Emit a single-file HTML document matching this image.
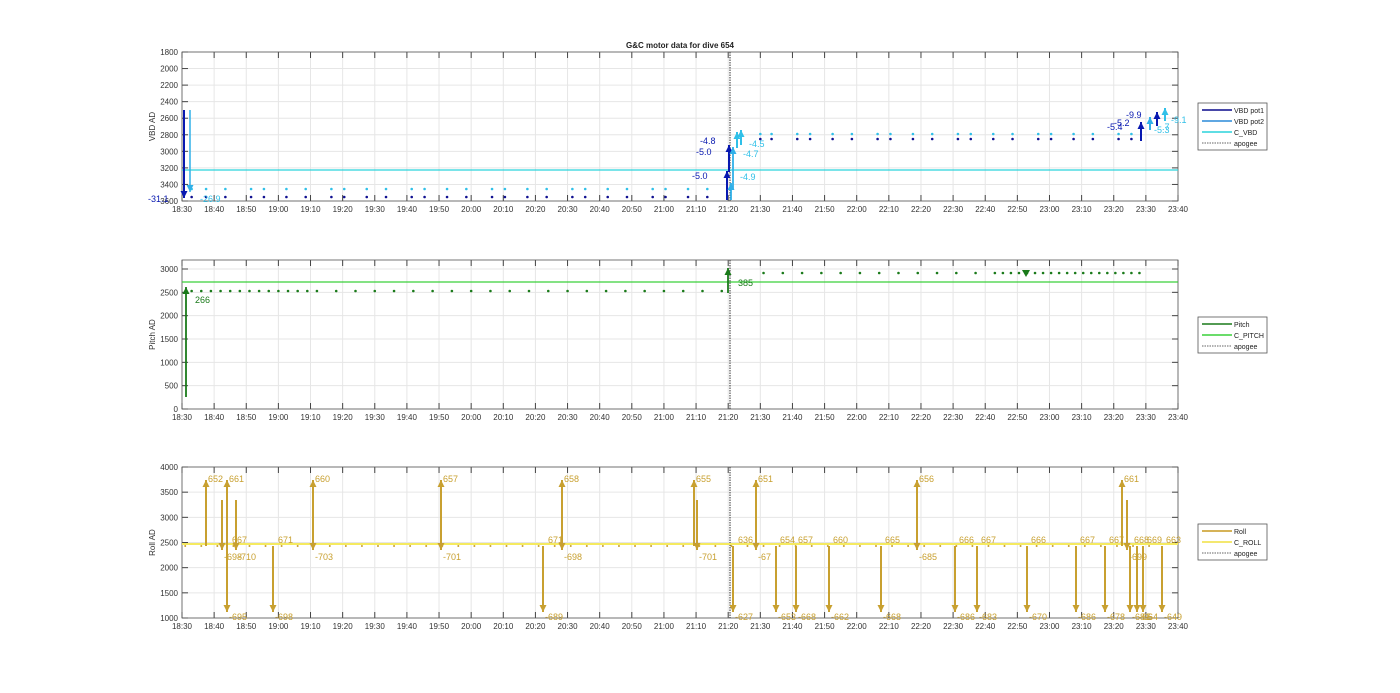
<!DOCTYPE html>
<html><head><meta charset="utf-8">
<style>
html,body{margin:0;padding:0;background:#fff;width:1400px;height:693px;overflow:hidden}
svg{display:block;font-family:"Liberation Sans",sans-serif}
</style></head>
<body>
<svg id="s" width="1400" height="693" viewBox="0 0 1400 693" xmlns="http://www.w3.org/2000/svg">
<text x="680" y="48" font-size="8" font-weight="bold" text-anchor="middle" fill="#222">G&amp;C motor data for dive 654</text>
</svg>
<script>
var S=document.getElementById('s'),NS='http://www.w3.org/2000/svg';
function el(n,a,t){var e=document.createElementNS(NS,n);for(var k in a)e.setAttribute(k,a[k]);if(t!==undefined)e.textContent=t;S.appendChild(e);return e;}
var X0=182,X1=1178;function X(t){return X0+t*(X1-X0)/310;}
var labels=[];for(var i=0;i<=31;i++){var m=18*60+30+i*10;var h=Math.floor(m/60),mm=m%60;labels.push(h+':'+(mm<10?'0':'')+mm);}
function panel(top,bot,yticks,Y,ylabel,leg){
 for(var i=0;i<=31;i++){var x=X(i*10);el('line',{x1:x,y1:top,x2:x,y2:bot,stroke:'#e6e6e6','stroke-width':1});}
 yticks.forEach(function(v){var y=Y(v);el('line',{x1:X0,y1:y,x2:X1,y2:y,stroke:'#e6e6e6'});el('text',{x:X0-4,y:y+3,'font-size':8,'text-anchor':'end',fill:'#333'},v);
  el('line',{x1:X0,y1:y,x2:X0+6,y2:y,stroke:'#444'});el('line',{x1:X1,y1:y,x2:X1-6,y2:y,stroke:'#444'});});
 for(var i=0;i<=31;i++){var x=X(i*10);el('line',{x1:x,y1:bot,x2:x,y2:bot-6,stroke:'#444'});el('line',{x1:x,y1:top,x2:x,y2:top+6,stroke:'#444'});
  el('text',{x:x,y:bot+11,'font-size':8,'text-anchor':'middle',fill:'#333'},labels[i]);}
 el('rect',{x:X0,y:top,width:X1-X0,height:bot-top,fill:'none',stroke:'#555','stroke-width':0.8});
 var cy=(top+bot)/2;var t=el('text',{x:0,y:0,'font-size':8,'text-anchor':'middle',fill:'#333',transform:'translate('+(155)+','+cy+') rotate(-90)'},ylabel);
 el('line',{x1:730,y1:top,x2:730,y2:bot,stroke:'#333','stroke-dasharray':'1.5,1'});
 var ly=leg.y;el('rect',{x:1198,y:ly,width:69,height:leg.items.length*11+3,fill:'#fff',stroke:'#555','stroke-width':0.8});
 leg.items.forEach(function(it,k){var yy=ly+7+k*11;el('line',{x1:1202,y1:yy,x2:1232,y2:yy,stroke:it[1],'stroke-width':it[2]?0.8:1.5,'stroke-dasharray':it[2]?'1.5,1':''});
  el('text',{x:1234,y:yy+3,'font-size':7,fill:'#222'},it[0]);});
}
function dot(x,y,c,r){el('circle',{cx:x,cy:y,r:r||1.3,fill:c});}
function arrow(x,y1,y2,c,w){el('line',{x1:x,y1:y1,x2:x,y2:y2,stroke:c,'stroke-width':w||1.8});var d=y2<y1?-1:1;
 el('path',{d:'M'+(x-3.5)+','+(y2-d*7)+' L'+(x+3.5)+','+(y2-d*7)+' L'+x+','+y2+'Z',fill:c});}
function txt(x,y,s,c,fs){el('text',{x:x,y:y,'font-size':fs||9,fill:c},s);}
// TOP
var YT=function(v){return 52+(v-1800)*149/1800;};
panel(52,201,[1800,2000,2200,2400,2600,2800,3000,3200,3400,3600],YT,'VBD AD',{y:103,items:[['VBD pot1','#0a0a8c'],['VBD pot2','#2a8ad8'],['C_VBD','#2ad4dc'],['apogee','#333',1]]});
el('line',{x1:X0,y1:170,x2:X1,y2:170,stroke:'#2ad4dc','stroke-width':1.2});
var dk='#101090',lt='#30c0e8';
for(var t=3;t<170;t+=3.5+((t*7)%5)){dot(X(t),197,dk);dot(X(t),189,lt);}
for(var t=180;t<300;t+=3.5+((t*7)%5)){dot(X(t),139,dk);dot(X(t),134,lt);}
arrow(184,110,198,'#0818b0',2);arrow(190,110,192,'#30b0e8',1.5);
txt(148,202,'-31.1','#0818b0');txt(200,202,'-26.9','#30c0e8');
arrow(727,200,171,'#0818b0',2);arrow(729,172,145,'#0818b0',2);arrow(731,200,183,'#30b0e8');arrow(733,190,147,'#30b0e8');arrow(737,148,132,'#30c0e8',2);arrow(741,145,130,'#30c0e8',2);
txt(692,179,'-5.0','#0818b0');txt(696,155,'-5.0','#0818b0');txt(700,144,'-4.8','#0818b0');
txt(740,180,'-4.9','#30c0e8');txt(743,157,'-4.7','#30c0e8');txt(749,147,'-4.5','#30c0e8');
arrow(1141,141,122,'#0818b0',2);arrow(1150,130,117,'#30b0e8',2);arrow(1157,126,112,'#0818b0',2);arrow(1165,121,108,'#30c0e8',2);
txt(1107,130,'-5.4','#0818b0');txt(1114,126,'-5.2','#0818b0');txt(1126,118,'-9.9','#0818b0');txt(1154,133,'-5.3','#30c0e8');txt(1162,130,'.7','#30c0e8');txt(1171,123,'-9.1','#30c0e8');
// MIDDLE
var YM=function(v){return 409-v*140/3000;};
panel(260,409,[0,500,1000,1500,2000,2500,3000],YM,'Pitch AD',{y:317,items:[['Pitch','#1a7a1a'],['C_PITCH','#3ad03a'],['apogee','#333',1]]});
el('line',{x1:X0,y1:282,x2:X1,y2:282,stroke:'#3ad03a','stroke-width':1.2});
for(var t=3;t<170;t+=(t<40?3:6)){dot(X(t),291,'#1a7a1a');}
for(var t=181;t<300;t+=(t>250?2.5:6)){dot(X(t),273,'#1a7a1a');}
arrow(186,397,287,'#1a7a1a',1.8);txt(195,303,'266','#1a7a1a');
arrow(728,293,268,'#1a7a1a',1.8);txt(738,286,'385','#1a7a1a');
el('path',{d:'M1022,270 L1030,270 L1026,277Z',fill:'#1a7a1a'});
// BOTTOM
var YB=function(v){return 618-(v-1000)*151/3000;};
panel(467,618,[1000,1500,2000,2500,3000,3500,4000],YB,'Roll AD',{y:524,items:[['Roll','#c89a20'],['C_ROLL','#f0e040'],['apogee','#333',1]]});
el('line',{x1:X0,y1:544,x2:X1,y2:544,stroke:'#f5ea60','stroke-width':2});
var rc='#c8a030';
for(var t=1;t<305;t+=5){dot(X(t),546,rc,1);}
var up=[[206,'652'],[227,'661'],[313,'660'],[441,'657'],[562,'658'],[694,'655'],[756,'651'],[917,'656'],[1122,'661']];
up.forEach(function(a){arrow(a[0],546,480,rc,2);txt(a[0]+2,482,a[1],rc);});
var dn=[[227,'-695'],[273,'-698'],[543,'-689'],[733,'-627'],[776,'-653'],[796,'-668'],[829,'-662'],[881,'-668'],[955,'-686'],[977,'-683'],[1027,'-670'],[1076,'-686'],[1105,'-678'],[1130,'-681'],[1137,'-65'],[1143,'-64'],[1162,'-649']];
dn.forEach(function(a){arrow(a[0],546,612,rc,2);txt(a[0]+2,620,a[1],rc);});
var up2=[[230,'667'],[276,'671'],[546,'671'],[736,'636'],[778,'654'],[796,'657'],[831,'660'],[883,'665'],[957,'666'],[979,'667'],[1029,'666'],[1078,'667'],[1107,'667'],[1132,'668'],[1145,'669'],[1164,'663']];
up2.forEach(function(a){txt(a[0]+2,543,a[1],rc);});
var dn2=[[222,'-698'],[236,'-710'],[313,'-703'],[441,'-701'],[562,'-698'],[697,'-701'],[756,'-67'],[917,'-685'],[1127,'-699']];
dn2.forEach(function(a){arrow(a[0],500,550,rc,2);txt(a[0]+2,560,a[1],rc);});
</script>
</body></html>
